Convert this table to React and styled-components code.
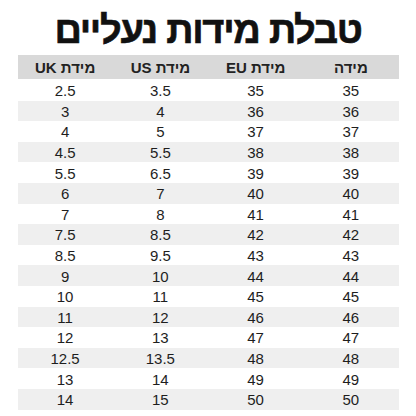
import React from "react";
import styled, { createGlobalStyle } from "styled-components";

const GlobalStyle = createGlobalStyle`
  body {
    margin: 0;
    background: #ffffff;
    font-family: "Liberation Sans", Arial, sans-serif;
  }
`;

const Page = styled.div`
  width: 416px;
  height: 416px;
  display: flex;
  flex-direction: column;
  align-items: center;
  direction: rtl;
  color: #1c1c1c;
`;

const Title = styled.h1`
  margin: 8px 0 0;
  height: 47px;
  font-size: 38px;
  line-height: 45px;
  font-weight: 700;
  color: #111;
  letter-spacing: -1.3px;
  -webkit-text-stroke: 0.6px #111;
`;

const Table = styled.div`
  width: 381px;
  display: flex;
  flex-direction: column;
`;

const Row = styled.div`
  display: grid;
  grid-template-columns: repeat(4, 1fr);
  height: ${(p) => (p.$head ? "24px" : "20.6px")};
  align-items: center;
  background: ${(p) => (p.$head ? "#d9d9d9" : p.$striped ? "#efefef" : "#ffffff")};
  margin-bottom: ${(p) => (p.$head ? "1px" : "0")};
`;

const Cell = styled.div`
  text-align: center;
  padding-top: 1px;
  font-size: 15px;
  font-weight: ${(p) => (p.$head ? 700 : 400)};
  color: ${(p) => (p.$head ? "#222" : "#1e1e1e")};
`;

const heads = ["מידה", "מידת EU", "מידת US", "מידת UK"];

const rows = [
  [35, 35, 3.5, 2.5],
  [36, 36, 4, 3],
  [37, 37, 5, 4],
  [38, 38, 5.5, 4.5],
  [39, 39, 6.5, 5.5],
  [40, 40, 7, 6],
  [41, 41, 8, 7],
  [42, 42, 8.5, 7.5],
  [43, 43, 9.5, 8.5],
  [44, 44, 10, 9],
  [45, 45, 11, 10],
  [46, 46, 12, 11],
  [47, 47, 13, 12],
  [48, 48, 13.5, 12.5],
  [49, 49, 14, 13],
  [50, 50, 15, 14],
];

export default function App() {
  return (
    <Page>
      <GlobalStyle />
      <Title>טבלת מידות נעליים</Title>
      <Table>
        <Row $head>
          {heads.map((h) => (
            <Cell key={h} $head>
              {h}
            </Cell>
          ))}
        </Row>
        {rows.map((r, i) => (
          <Row key={i} $striped={i % 2 === 1}>
            {r.map((v, j) => (
              <Cell key={j}>{v}</Cell>
            ))}
          </Row>
        ))}
      </Table>
    </Page>
  );
}
